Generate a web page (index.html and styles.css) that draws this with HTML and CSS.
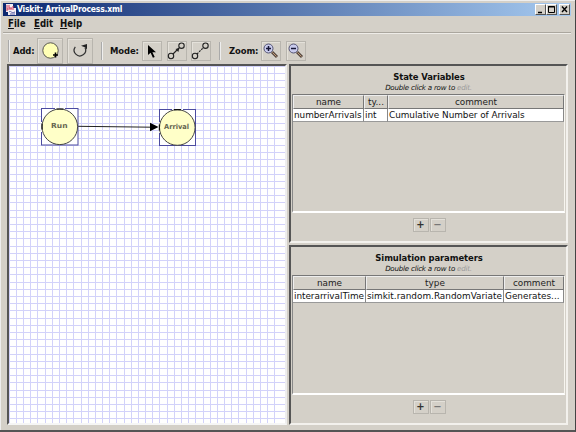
FILE: index.html
```html
<!DOCTYPE html>
<html lang="en">
<head>
<meta charset="utf-8">
<title>Viskit: ArrivalProcess.xml</title>
<link rel="stylesheet" href="styles.css">
</head>
<body>
<div class="window">
  <header class="titlebar">
    <svg class="logo" width="12" height="12" viewBox="0 0 12 12"><path fill="#f4eef4" d="M1 0h7v4h3v7H3V8H1z"/><path d="M2 1v6M4 1v3h3M2 5h5M8 2v4" stroke="#d23a5c" fill="none"/><path d="M4 8c2-2 2 2 6 0M5 10h5" stroke="#5a62a8" fill="none"/></svg>
    <span class="title">Viskit: ArrivalProcess.xml</span>
    <div class="controls">
      <span class="control"><svg width="10" height="10"><path d="M2 7.5h4" stroke="#000" stroke-width="1.5"/></svg></span>
      <span class="control"><svg width="10" height="10"><path d="M1.5 1.5h6v6h-6zM1 2h7" stroke="#000" fill="none"/></svg></span>
      <span class="control close"><svg width="10" height="10"><path d="M2 1.5l5 5.5m0-5.5l-5 5.5" stroke="#000" stroke-width="1.4"/></svg></span>
    </div>
  </header>
  <nav class="menubar">
    <span class="menu file"><u>F</u>ile</span><span class="menu edit"><u>E</u>dit</span><span class="menu help"><u>H</u>elp</span>
  </nav>
  <div class="toolbar">
    <i class="grip"></i>
    <span class="label add">Add:</span>
    <button class="tool wide"><svg width="24" height="23"><circle cx="12.5" cy="11.5" r="7.7" fill="#ffffb5" stroke="#333" stroke-width=".8"/><path d="M17.5 13.5v5M15 16h5" stroke="#000" stroke-width="1.6"/></svg></button>
    <button class="tool wide second"><svg width="24" height="23"><path d="M7.3 7.8a5.7 5.7 0 1 0 9.8 1" fill="none" stroke="#333" stroke-width="1.2"/><path d="M13 6.7L19 5v5.5l-1.8-2z" fill="#222"/></svg></button>
    <i class="separator s1"></i>
    <span class="label mode">Mode:</span>
    <button class="tool"><svg width="20" height="20"><path d="M6 4v10l2.6-2.2 2.3 5 1.8-.8-2.3-4.8H14z" fill="#000"/></svg></button>
    <button class="tool link"><svg width="20" height="20"><circle cx="4" cy="15" r="2.7"/><circle cx="14.5" cy="4.7" r="2.7"/><path d="M6 13l6-6"/><path d="M8.5 8L12.5 7l-1.2 4z" fill="#222" stroke="none"/></svg></button>
    <button class="tool link"><svg width="20" height="20"><circle cx="4" cy="15" r="2.7"/><circle cx="14.5" cy="4.7" r="2.7"/><path d="M6 13l6-6" stroke-dasharray="2 1"/></svg></button>
    <i class="separator s2"></i>
    <span class="label zoom">Zoom:</span>
    <button class="tool"><svg width="20" height="20"><path d="M11 11l5 5" stroke="#554840" stroke-width="3"/><path d="M11.5 11.5l4 4" stroke="#c49c78"/><circle cx="7.5" cy="7.5" r="4.5" fill="#c9cbed" stroke="#555574"/><path d="M5 7.5h5M7.5 5v5" stroke="#151536" stroke-width="1.5"/></svg></button>
    <button class="tool last"><svg width="20" height="20"><path d="M11 11l5 5" stroke="#554840" stroke-width="3"/><path d="M11.5 11.5l4 4" stroke="#c49c78"/><circle cx="7.5" cy="7.5" r="4.5" fill="#c9cbed" stroke="#555574"/><path d="M5 7.5h5" stroke="#151536" stroke-width="1.5"/></svg></button>
  </div>
  <main class="workspace">
    <section class="canvas">
      <svg width="277" height="358" viewBox="9 66 277 358">
        <path id="grid" class="grid"/>
        <path d="M78 126.3L151 127.2" stroke="#222"/><path d="M150 122.7L158.5 127l-8.5 4.3z" fill="#000"/>
        <g class="node"><rect x="41.5" y="108.5" width="36.5" height="36.5"/><path class="gap" d="M55 108.5h10M41.5 122v10"/><circle cx="59.8" cy="126.8" r="17.8"/><path class="mark" d="M56.5 109h7M42 123.5v6"/><text x="51" y="128.4" textLength="16.5" lengthAdjust="spacingAndGlyphs">Run</text></g>
        <g class="node"><rect x="159.5" y="109.5" width="36" height="36"/><path class="gap" d="M172 109.5h11M159.5 122v11"/><circle cx="177.3" cy="127.5" r="17.8"/><path class="mark" d="M174 109.7h7M159.4 124.5v6"/><text x="164" y="129.4" textLength="25" lengthAdjust="spacingAndGlyphs">Arrival</text></g>
      </svg>
    </section>
    <div class="side">
      <section class="panel state">
        <div class="heading"><h2>State Variables</h2><p>Double click a row to <span>edit.</span></p></div>
        <div class="tablebox"><table>
          <colgroup><col class="a1"><col class="a2"><col></colgroup>
          <tr><th>name</th><th>ty...</th><th>comment</th></tr>
          <tr><td class="tight">numberArrivals</td><td>int</td><td class="tight">Cumulative Number of Arrivals</td></tr>
        </table></div>
        <div class="actions"><button>+</button><button class="off">−</button></div>
      </section>
      <section class="panel params">
        <div class="heading"><h2>Simulation parameters</h2><p>Double click a row to <span>edit.</span></p></div>
        <div class="tablebox"><table>
          <colgroup><col class="b1"><col class="b2"><col></colgroup>
          <tr><th>name</th><th>type</th><th>comment</th></tr>
          <tr><td class="tight">interarrivalTime</td><td>simkit.random.RandomVariate</td><td>Generates...</td></tr>
        </table></div>
        <div class="actions"><button>+</button><button class="off">−</button></div>
      </section>
    </div>
  </main>
</div>
<script src="grid.js"></script>
</body>
</html>
```
FILE: styles.css
```css
* { box-sizing: border-box; }
body { margin: 0; background: #d4d0c8; color: #111; font-family: "DejaVu Sans", sans-serif; overflow: hidden; }
.window { width: 576px; height: 432px; padding: 3px 4px 0 3px; background: #d4d0c8; border-right: 1px solid #444; border-bottom: 2px solid #555; box-shadow: inset 1px 1px #eee; }
.titlebar { height: 13px; display: flex; align-items: center; padding: 0 1px 0 2px; background: linear-gradient(90deg, #0c2870, #a6caf0); }
.title { color: #fff; font: bold 8.5px/13px "DejaVu Sans Condensed", "DejaVu Sans", sans-serif; letter-spacing: -.22px; white-space: nowrap; }
.controls { display: flex; margin-left: auto; }
.control { width: 11px; height: 11px; background: #d4d0c8; border: 1px solid; border-color: #fff #555 #555 #fff; display: flex; }
.close { margin-left: 2px; }
.menubar { height: 17px; display: flex; align-items: center; padding-left: 5px; border-bottom: 1px solid #aaa69e; box-shadow: 0 1px #eeece8; font: bold 9.6px/16px "DejaVu Sans Condensed", "DejaVu Sans", sans-serif; }
.file, .edit { width: 26px; }
.menu { white-space: nowrap; }
.toolbar { height: 31px; display: flex; align-items: center; padding: 4px 0 0 5px; }
.grip, .separator { width: 2px; height: 22px; border-left: 1px solid #aaa; border-right: 1px solid #eee; flex: none; }
.separator { height: 18px; }
.label { font: bold 9.4px/20px "DejaVu Sans Condensed", "DejaVu Sans", sans-serif; letter-spacing: -.1px; white-space: nowrap; flex: none; }
.add { width: 24px; margin-left: 3px; }
.mode { width: 32px; margin-left: 7px; }
.zoom { width: 32px; margin-left: 8px; }
button { padding: 0; color: #333; background: #d4d0c8; border: 1px solid #b8b5ae; box-shadow: inset 1px 1px #e4e1da; display: flex; align-items: center; justify-content: center; }
.tool { width: 20px; height: 20px; flex: none; margin-right: 5px; }
.tool svg { flex: none; }
.wide { width: 26px; height: 26px; margin-right: 4px; }
.second { margin-right: 8px; }
.link { margin-right: 4px; }
.link svg { fill: none; stroke: #222; stroke-width: 1.1; }
.s2 { margin-left: 4px; }
.workspace { height: 361px; display: flex; padding-left: 4px; }
.canvas { width: 280px; height: 361px; border: 2px solid; border-color: #555 #eee #f6f6f6 #555; background: #fff; overflow: hidden; }
.canvas svg { display: block; }
.grid { fill: none; stroke: #d2d2fa; stroke-width: 1; }
.node rect { fill: #fff; stroke: #4b4ba0; }
.node circle { fill: #ffffc8; stroke: #444; stroke-width: 1; }
.node .gap { stroke: #fff; stroke-width: 1.6; }
.node .mark { stroke: #111; stroke-width: 1.2; }
.node text { font: bold 7px "DejaVu Sans", sans-serif; fill: #666650; }
.side { width: 279px; margin-left: 2px; }
.panel { display: flex; flex-direction: column; border: 2px solid; border-color: #555 #f3f1ed #f3f1ed #555; }
.state { height: 179px; margin-bottom: 2px; }
.params { height: 180px; }
.heading { height: 28px; text-align: center; flex: none; }
h2 { margin: 0; padding: 5px 0 0 1px; font: bold 9.4px/12px "DejaVu Sans Condensed", "DejaVu Sans", sans-serif; letter-spacing: -.08px; }
p { margin: 0; font: italic 7.1px/10px "DejaVu Sans", sans-serif; letter-spacing: -.22px; }
p span { color: #999; }
.tablebox { flex: 1; margin: 0 1px; border: 1px solid; border-color: #777 #f7f5ef #fff #888; border-bottom-width: 2px; }
table { width: 271px; table-layout: fixed; border-collapse: separate; border-spacing: 0; }
th, td { padding: 0 1px; overflow: hidden; white-space: nowrap; font: 8.9px/12px "DejaVu Sans", sans-serif; }
th { height: 13px; border: 1px solid; border-color: #eee #777 #777 #eee; color: #222; }
td { height: 13px; background: #fff; border-right: 1px solid #888; border-bottom: 1px solid #999; }
.a1 { width: 71px; } .a2 { width: 24px; } .b1 { width: 73px; } .b2 { width: 138px; }
.tight { letter-spacing: -.04px; }
.actions { height: 28px; flex: none; display: flex; justify-content: center; gap: 1px; padding: 5px 0 0 1px; }
.actions button { width: 16px; height: 14px; font: bold 10px/12px "DejaVu Sans", sans-serif; }
.actions .off { color: #777; }
```
FILE: grid.js
```javascript
// Grid lines snapped to whole pixels.
let d = "";
for (let i = 0; i <= 37; i++) d += `M${Math.floor(9.2 + i * 7.18) + 0.5} 66V424`;
for (let i = 0; i <= 49; i++) d += `M9 ${Math.floor(66.1 + i * 7.2) + 0.5}H286`;
document.getElementById("grid").setAttribute("d", d);
```
